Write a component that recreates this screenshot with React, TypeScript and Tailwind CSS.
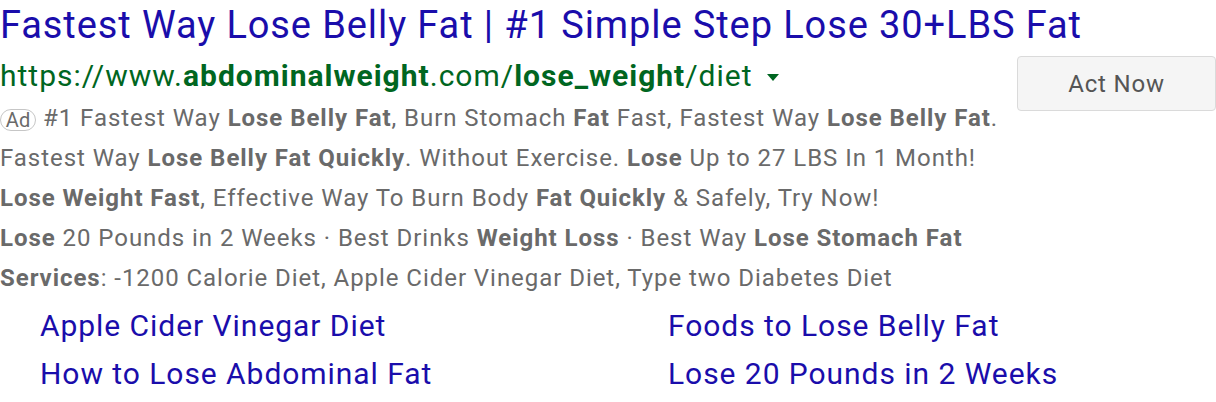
export default function App() {
  const body = "text-[24px] leading-[40px] tracking-[0.95px] text-[#6a6a6a] whitespace-nowrap"
  return (
    <div className="w-[1216px] h-[402px] overflow-hidden bg-white font-['Roboto',sans-serif]">
      <div className="text-[38px] leading-[50px] tracking-[0.9px] text-[#1a0dab] whitespace-nowrap">
        Fastest Way Lose Belly Fat | #1 Simple Step Lose 30+LBS Fat
      </div>
      <div className="flex">
        <div className="flex-1 pt-[2px]">
          <div className="flex items-center h-[46px] text-[30px] tracking-[1px] text-[#006621] whitespace-nowrap">
            <span>
              https://www.<b className="font-bold">abdominalweight</b>.com/<b className="font-bold">lose_weight</b>/diet
            </span>
            <svg className="ml-[14px] mt-[4px]" width="12" height="7" viewBox="0 0 12 7">
              <path d="M0 0 L12 0 L6 7 Z" fill="#006621" />
            </svg>
          </div>
          <div className={body}>
            <span className="inline-flex items-center justify-center w-[36px] h-[22px] mr-[7px] rounded-full border border-[#c6c6c6] text-[20px] tracking-normal leading-none text-[#6a6a6a] align-[-1px]">Ad</span>
            #1 Fastest Way <b>Lose Belly Fat</b>, Burn Stomach <b>Fat</b> Fast, Fastest Way <b>Lose Belly Fat</b>.
          </div>
          <div className={body}>
            Fastest Way <b>Lose Belly Fat Quickly</b>. Without Exercise. <b>Lose</b> Up to 27 LBS In 1 Month!
          </div>
          <div className={body}>
            <b>Lose Weight Fast</b>, Effective Way To Burn Body <b>Fat Quickly</b> &amp; Safely, Try Now!
          </div>
          <div className={body}>
            <b>Lose</b> 20 Pounds in 2 Weeks · Best Drinks <b>Weight Loss</b> · Best Way <b>Lose Stomach Fat</b>
          </div>
          <div className={body}>
            <b>Services</b>: -1200 Calorie Diet, Apple Cider Vinegar Diet, Type two Diabetes Diet
          </div>
        </div>
        <div className="pt-[6px]">
          <button className="w-[199px] h-[55px] rounded-[4px] border border-[#dadada] bg-[#f5f5f5] text-[24px] tracking-[0.8px] text-[#555555]">
            Act Now
          </button>
        </div>
      </div>
      <div className="grid grid-cols-[628px_1fr] pl-[40px] pt-[4px] text-[30px] leading-[48px] tracking-[0.95px] text-[#1a0dab] whitespace-nowrap">
        <div>Apple Cider Vinegar Diet</div>
        <div>Foods to Lose Belly Fat</div>
        <div>How to Lose Abdominal Fat</div>
        <div>Lose 20 Pounds in 2 Weeks</div>
      </div>
    </div>
  )
}
